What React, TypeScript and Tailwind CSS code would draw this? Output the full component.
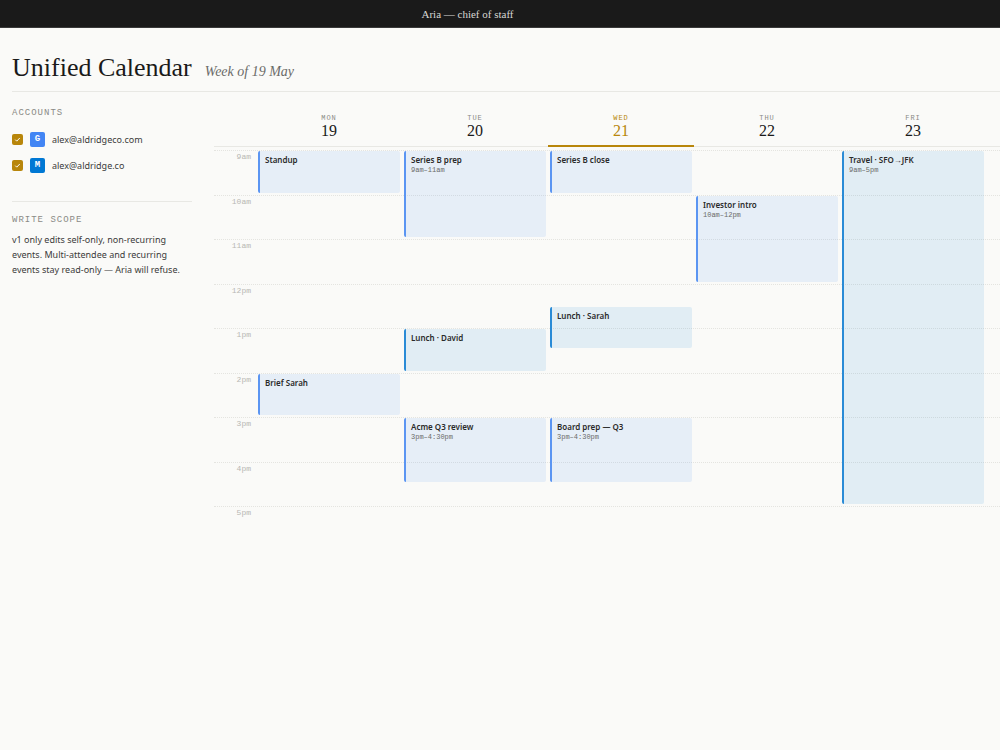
import React from "react";

type Account = {
  id: string;
  letter: string;
  email: string;
  badge: string;
};

type CalendarEvent = {
  title: string;
  time?: string;
  day: number;
  start: number;
  end: number;
  source: "google" | "microsoft";
};

const FIRST_HOUR = 9;

const accounts: Account[] = [
  { id: "google", letter: "G", email: "alex@aldridgeco.com", badge: "bg-[#4285f4]" },
  { id: "microsoft", letter: "M", email: "alex@aldridge.co", badge: "bg-[#0078d4]" },
];

const days = [
  { name: "Mon", date: 19 },
  { name: "Tue", date: 20 },
  { name: "Wed", date: 21, today: true },
  { name: "Thu", date: 22 },
  { name: "Fri", date: 23 },
];

const hours = ["9am", "10am", "11am", "12pm", "1pm", "2pm", "3pm", "4pm"];

const events: CalendarEvent[] = [
  { title: "Standup", day: 0, start: 9, end: 10, source: "google" },
  { title: "Brief Sarah", day: 0, start: 14, end: 15, source: "google" },
  { title: "Series B prep", time: "9am–11am", day: 1, start: 9, end: 11, source: "google" },
  { title: "Lunch · David", day: 1, start: 13, end: 14, source: "microsoft" },
  { title: "Acme Q3 review", time: "3pm–4:30pm", day: 1, start: 15, end: 16.5, source: "google" },
  { title: "Series B close", day: 2, start: 9, end: 10, source: "google" },
  { title: "Lunch · Sarah", day: 2, start: 12.5, end: 13.5, source: "microsoft" },
  { title: "Board prep — Q3", time: "3pm–4:30pm", day: 2, start: 15, end: 16.5, source: "google" },
  { title: "Investor intro", time: "10am–12pm", day: 3, start: 10, end: 12, source: "google" },
  { title: "Travel · SFO→JFK", time: "9am–5pm", day: 4, start: 9, end: 17, source: "microsoft" },
];

const eventColors = {
  google: "border-[#5b95f2] bg-[#388af4]/10",
  microsoft: "border-[#2a8bd6] bg-[#0078d4]/10",
};

const serif = "font-[Georgia,'Liberation_Serif',serif]";
const mono = "font-['Liberation_Mono',monospace]";

// Half-hour slots, counted from the top of the grid
const slot = (hour: number) => (hour - FIRST_HOUR) * 2 + 1;

function AccountRow({ account }: { account: Account }) {
  return (
    <label className="flex items-center gap-[7px]">
      <span className="grid h-[11px] w-[11px] place-items-center">
        <input
          type="checkbox"
          defaultChecked
          className="col-start-1 row-start-1 h-[11px] w-[11px] appearance-none rounded-[2px] bg-[#b8860b]"
        />
        <svg viewBox="0 0 12 12" className="pointer-events-none col-start-1 row-start-1 h-[9px] w-[9px]">
          <path d="M3 6.2 5 8.2 9 4" fill="none" stroke="#fff" strokeWidth="1.3" />
        </svg>
      </span>
      <span
        className={`flex h-[15px] w-[15px] items-center justify-center rounded-[2px] text-[9px] leading-none font-bold text-white ${mono} ${account.badge}`}
      >
        {account.letter}
      </span>
      <span className="pt-px text-[9px] leading-[14px] text-[#3a3a3a]">{account.email}</span>
    </label>
  );
}

function Sidebar() {
  return (
    <aside className="w-[180px] shrink-0 pt-[15px]">
      <h2 className={`text-[9px] leading-[12px] tracking-[1px] text-[#8a8a86] uppercase ${mono}`}>Accounts</h2>
      <div className="mt-[13px] flex flex-col gap-[11px] border-b border-[#e8e8e4] pb-[28px]">
        {accounts.map((account) => (
          <AccountRow key={account.id} account={account} />
        ))}
      </div>
      <h2 className={`mt-[12px] text-[9px] leading-[12px] tracking-[1px] text-[#8a8a86] uppercase ${mono}`}>
        Write scope
      </h2>
      <p className="mt-[6px] text-[9px] leading-[15px] text-[#3a3a3a]">
        v1 only edits self-only, non-recurring
        <br />
        events. Multi-attendee and recurring
        <br />
        events stay read-only — Aria will refuse.
      </p>
    </aside>
  );
}

function WeekGrid() {
  return (
    <section className="min-w-0 flex-1 pt-[20px]">
      <div className="grid grid-cols-[42px_repeat(5,minmax(0,1fr))_14px] border-b border-[#e8e8e4]">
        {days.map((day, index) => (
          <div
            key={day.name}
            style={{ gridColumn: index + 2 }}
            className={`-mb-px h-[35px] border-b-2 text-center ${
              day.today ? "border-[#b8860b] text-[#b8860b]" : "border-transparent text-[#1a1a1a]"
            }`}
          >
            <div
              className={`text-[7px] leading-[12px] tracking-[1px] uppercase ${mono} ${
                day.today ? "" : "text-[#8a8a86]"
              }`}
            >
              {day.name}
            </div>
            <div className={`text-[16px] leading-[14px] ${serif}`}>{day.date}</div>
          </div>
        ))}
      </div>

      <div className="mt-[3px] grid h-[356px] grid-cols-[42px_repeat(5,minmax(0,1fr))_14px] grid-rows-[repeat(16,minmax(0,1fr))]">
        {hours.map((hour, index) => (
          <div
            key={hour}
            style={{ gridRow: `${index * 2 + 1} / span 2` }}
            className={`col-span-full col-start-1 border-t border-dotted border-[#e4e4e0] text-[8px] leading-[12px] text-[#b8b8b4] ${mono}`}
          >
            <div className="w-[37px] text-right">{hour}</div>
          </div>
        ))}
        {events.map((event) => (
          <article
            key={`${event.day}-${event.start}`}
            style={{ gridColumn: event.day + 2, gridRow: `${slot(event.start)} / ${slot(event.end)}` }}
            className={`mx-[2px] mt-px mb-[2px] rounded-[2px] border-l-2 px-[5px] pt-[3px] ${eventColors[event.source]}`}
          >
            <h3 className="text-[8px] leading-[12px] font-semibold whitespace-nowrap text-[#2a2a2a]">{event.title}</h3>
            {event.time && <p className={`text-[7px] leading-[9px] text-[#6b6b68] ${mono}`}>{event.time}</p>}
          </article>
        ))}
      </div>
      <div
        className={`border-t border-dotted border-[#e4e4e0] text-[8px] leading-[12px] text-[#b8b8b4] ${mono}`}
      >
        <div className="w-[37px] text-right">5pm</div>
      </div>
    </section>
  );
}

export default function App() {
  return (
    <div className="min-h-screen bg-[#fafaf8] font-['Noto_Sans','Liberation_Sans',sans-serif] text-[#1a1a1a]">
      <div
        className={`h-[28px] border-b border-[#3a3a3a] bg-[#1a1a1a] pr-[65px] text-center text-[11px] leading-[28px] text-[#d8d8d4] ${serif}`}
      >
        Aria — chief of staff
      </div>
      <div className="pl-3">
        <header className="flex h-[64px] items-baseline gap-[13px] border-b border-[#e8e8e4] pt-[23px]">
          <h1 className={`text-[26px] leading-[34px] ${serif}`}>Unified Calendar</h1>
          <span className={`text-[14px] text-[#6b6b68] italic ${serif}`}>Week of 19 May</span>
        </header>
        <main className="flex gap-[22px]">
          <Sidebar />
          <WeekGrid />
        </main>
      </div>
    </div>
  );
}
